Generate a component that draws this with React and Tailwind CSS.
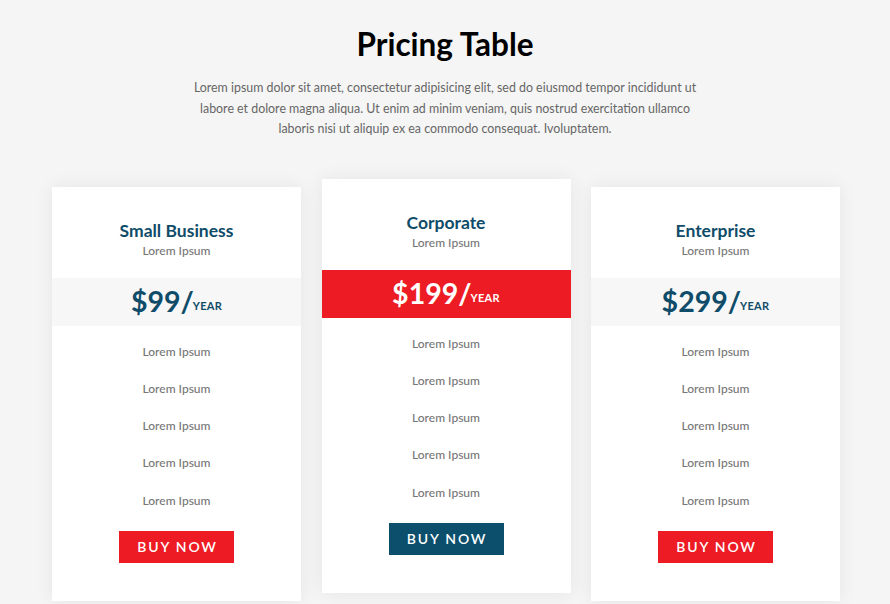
import React from "react";

const plans = [
  { name: "Small Business", price: "$99/", featured: false },
  { name: "Corporate", price: "$199/", featured: true },
  { name: "Enterprise", price: "$299/", featured: false },
];

function Card({ plan }) {
  const f = plan.featured;
  return (
    <div
      className={`w-[249px] bg-white shadow-[0_0_18px_rgba(0,0,0,0.07)] pt-[32px] pb-[38px] flex flex-col items-center ${
        f ? "mt-0" : "mt-[8px]"
      }`}
    >
      <h3 className="text-[17.5px] leading-[24px] font-bold text-[#0f4c69]">{plan.name}</h3>
      <p className="text-[12px] leading-[16px] font-medium text-[#777]">Lorem Ipsum</p>
      <div
        className={`mt-[19px] w-full h-[48px] flex items-center justify-center ${
          f ? "bg-[#ed1c24] text-white" : "bg-[#f7f7f7] text-[#0f4c69]"
        }`}
      >
        <span className="text-[28.5px] leading-none font-bold">{plan.price}</span>
        <span className="text-[11px] font-bold self-end mb-[11px] tracking-[0.3px] -ml-[1px]">YEAR</span>
      </div>
      <ul className="mt-[18px] flex flex-col items-center gap-[21.25px]">
        {[0, 1, 2, 3, 4].map((i) => (
          <li key={i} className="text-[12px] leading-[16px] font-medium text-[#777]">
            Lorem Ipsum
          </li>
        ))}
      </ul>
      <button
        className={`mt-[22px] w-[115px] h-[32px] text-white text-[14px] font-semibold tracking-[1.8px] flex items-center justify-center pl-[2px] ${
          f ? "bg-[#0b4f6c]" : "bg-[#ed1c24]"
        }`}
      >
        BUY NOW
      </button>
    </div>
  );
}

export default function App() {
  return (
    <div
      className="w-[890px] h-[604px] bg-[#f5f5f5] overflow-hidden flex flex-col items-center pt-[25px]"
      style={{ fontFamily: "Lato, 'Open Sans', sans-serif" }}
    >
      <h1 className="text-[31.5px] leading-[38px] font-bold text-black">Pricing Table</h1>
      <p className="mt-[15px] text-[12.4px] leading-[20.5px] text-[#666] text-center">
        Lorem ipsum dolor sit amet, consectetur adipisicing elit, sed do eiusmod tempor incididunt ut
        <br />
        labore et dolore magna aliqua. Ut enim ad minim veniam, quis nostrud exercitation ullamco
        <br />
        laboris nisi ut aliquip ex ea commodo consequat. Ivoluptatem.
      </p>
      <div className="mt-[39px] flex items-start gap-[20.5px] pl-[2px]">
        {plans.map((p) => (
          <Card key={p.name} plan={p} />
        ))}
      </div>
    </div>
  );
}
